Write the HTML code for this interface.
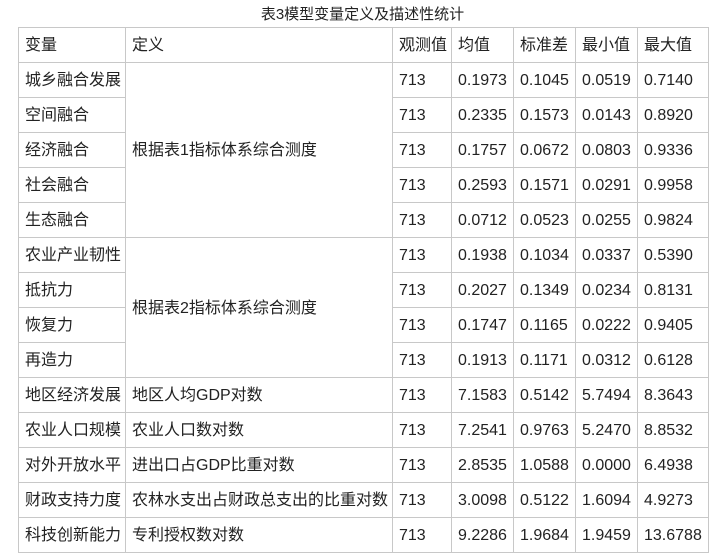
<!DOCTYPE html>
<html><head><meta charset="utf-8"><style>
body{margin:0;background:#fff;font-family:"Liberation Sans","Noto Sans CJK SC",sans-serif;color:#222;}
.t{position:absolute;left:0;width:725px;top:5px;text-align:center;font-size:15px;line-height:20px;}
table{position:absolute;left:18px;top:27px;border-collapse:collapse;table-layout:fixed;width:690px;font-size:16px;}
td{border:1px solid #c8c8c8;height:34px;padding:0 0 4px 6px;box-sizing:border-box;white-space:nowrap;overflow:hidden;vertical-align:middle;}
tr:not(:first-child) td:nth-last-child(-n+5){padding:2px 0 0 6px;}
tr{height:35px;}
</style></head><body>
<div class="t">表3模型变量定义及描述性统计</div>
<table>
<colgroup><col style="width:107px"><col style="width:267px"><col style="width:59px"><col style="width:62px"><col style="width:62px"><col style="width:62px"><col style="width:71px"></colgroup>
<tr><td>变量</td><td>定义</td><td>观测值</td><td>均值</td><td>标准差</td><td>最小值</td><td>最大值</td></tr>
<tr><td>城乡融合发展</td><td rowspan="5">根据表1指标体系综合测度</td><td>713</td><td>0.1973</td><td>0.1045</td><td>0.0519</td><td>0.7140</td></tr>
<tr><td>空间融合</td><td>713</td><td>0.2335</td><td>0.1573</td><td>0.0143</td><td>0.8920</td></tr>
<tr><td>经济融合</td><td>713</td><td>0.1757</td><td>0.0672</td><td>0.0803</td><td>0.9336</td></tr>
<tr><td>社会融合</td><td>713</td><td>0.2593</td><td>0.1571</td><td>0.0291</td><td>0.9958</td></tr>
<tr><td>生态融合</td><td>713</td><td>0.0712</td><td>0.0523</td><td>0.0255</td><td>0.9824</td></tr>
<tr><td>农业产业韧性</td><td rowspan="4">根据表2指标体系综合测度</td><td>713</td><td>0.1938</td><td>0.1034</td><td>0.0337</td><td>0.5390</td></tr>
<tr><td>抵抗力</td><td>713</td><td>0.2027</td><td>0.1349</td><td>0.0234</td><td>0.8131</td></tr>
<tr><td>恢复力</td><td>713</td><td>0.1747</td><td>0.1165</td><td>0.0222</td><td>0.9405</td></tr>
<tr><td>再造力</td><td>713</td><td>0.1913</td><td>0.1171</td><td>0.0312</td><td>0.6128</td></tr>
<tr><td>地区经济发展</td><td>地区人均GDP对数</td><td>713</td><td>7.1583</td><td>0.5142</td><td>5.7494</td><td>8.3643</td></tr>
<tr><td>农业人口规模</td><td>农业人口数对数</td><td>713</td><td>7.2541</td><td>0.9763</td><td>5.2470</td><td>8.8532</td></tr>
<tr><td>对外开放水平</td><td>进出口占GDP比重对数</td><td>713</td><td>2.8535</td><td>1.0588</td><td>0.0000</td><td>6.4938</td></tr>
<tr><td>财政支持力度</td><td>农林水支出占财政总支出的比重对数</td><td>713</td><td>3.0098</td><td>0.5122</td><td>1.6094</td><td>4.9273</td></tr>
<tr><td>科技创新能力</td><td>专利授权数对数</td><td>713</td><td>9.2286</td><td>1.9684</td><td>1.9459</td><td>13.6788</td></tr>
</table>
</body></html>
